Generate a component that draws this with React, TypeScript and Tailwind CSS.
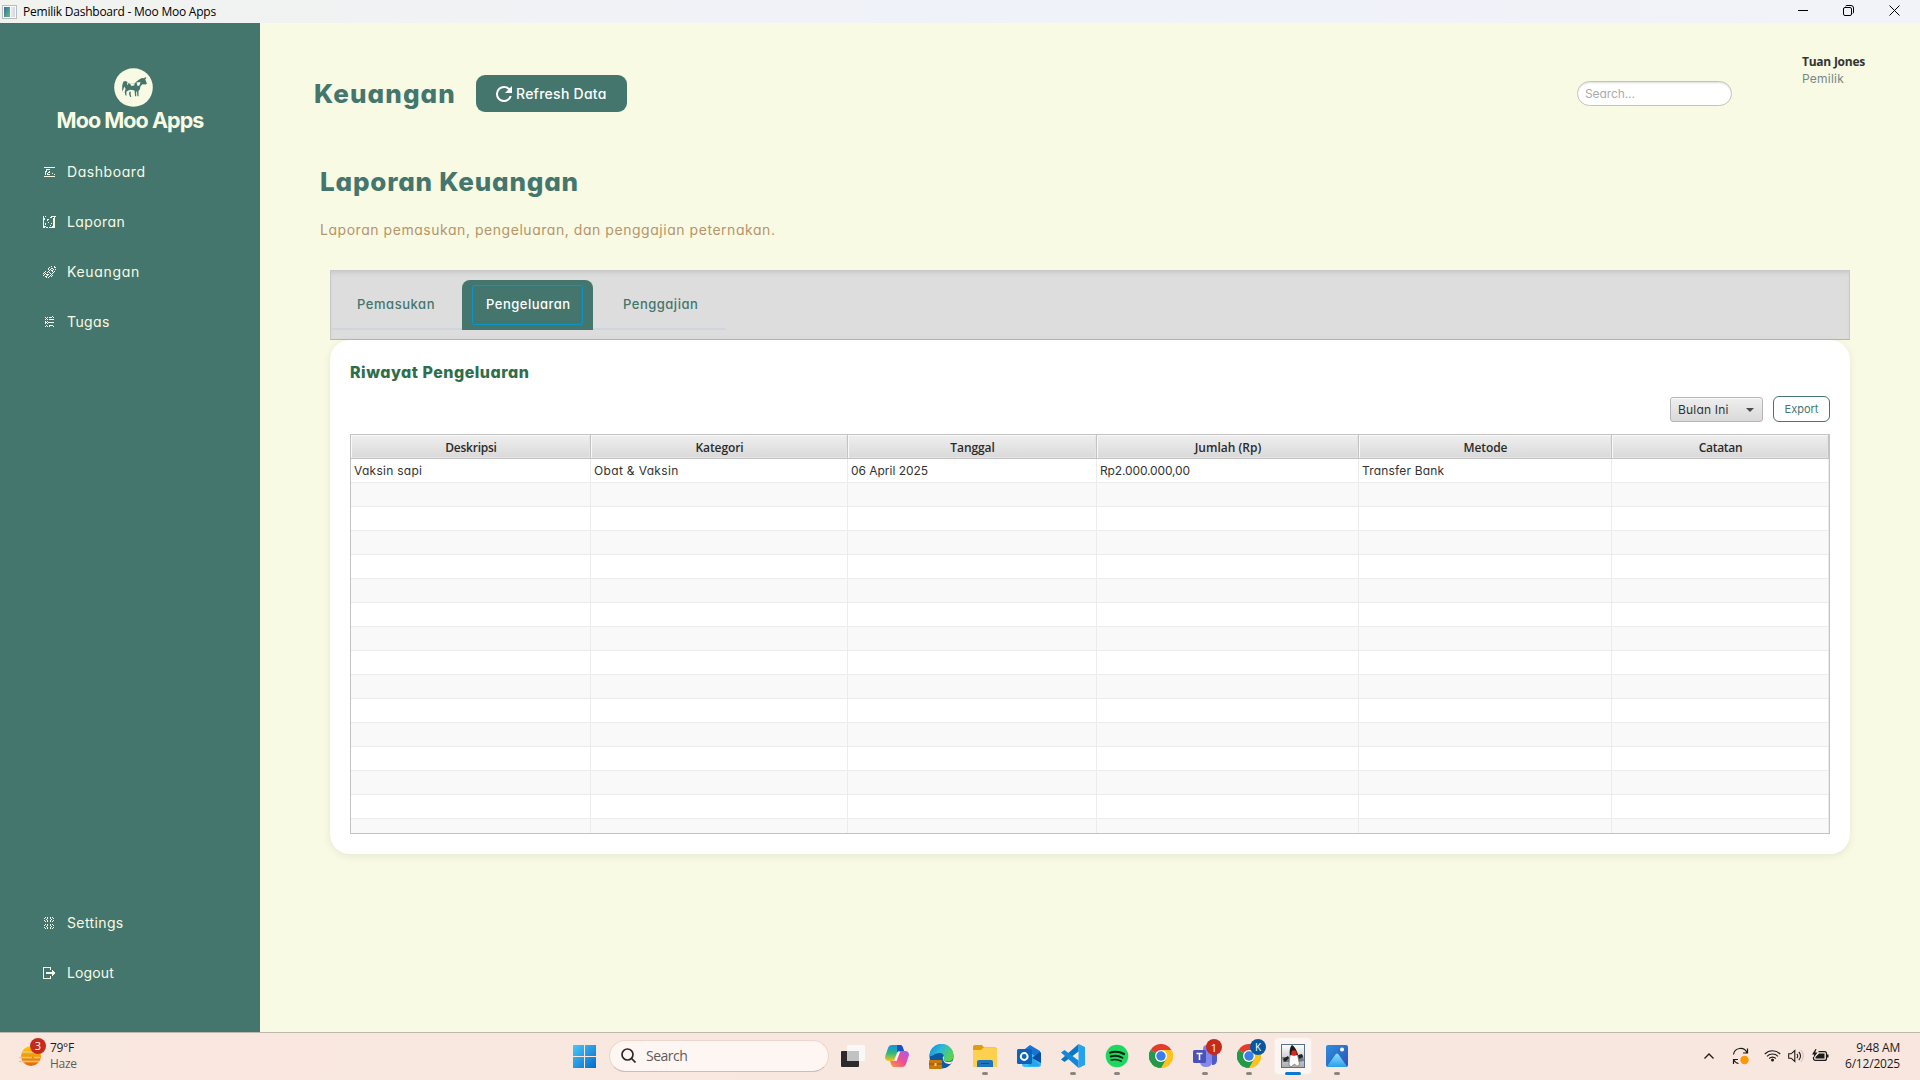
import React from 'react';

const POPPINS = "font-['Inter',sans-serif] [font-feature-settings:'cv11']";
const SEGOE = "font-['Open_Sans',sans-serif]";

function Pixels({ rows }: { rows: string[] }) {
  return (
    <svg className="shrink-0" width="13" height="13" viewBox="0 0 13 13" shapeRendering="crispEdges" fill="#f9fae4">
      {rows.flatMap((row, y) =>
        row.split('').map((c, x) => (c === '#' ? <rect key={`${x}-${y}`} x={x} y={y} width="1" height="1" /> : null)),
      )}
    </svg>
  );
}

const dashboardIcon = [
  '.............',
  '.###########.',
  '.............',
  '...####......',
  '...#.........',
  '..##..#......',
  '..#..##......',
  '..#.#....#...',
  '..#.###....#.',
  '.............',
  '.###########.',
  '.............',
  '.............',
];
const laporanIcon = [
  '#.#.....#####',
  '#......##..#.',
  '##........##.',
  '##..##....##.',
  '#...#.....##.',
  '#.........##.',
  '#....#....##.',
  '#.#.....#.##.',
  '#.#.......##.',
  '#......#..##.',
  '###......###.',
  '##.##.######.',
  '.............',
];
const keuanganIcon = [
  '........#..#.',
  '......#....##',
  '.....#..##...',
  '.....#.#..#.#',
  '......#.##...',
  '..#..#...#.#.',
  '.#..#.#...#..',
  '#.#....#.#...',
  '.#.###..#....',
  '#...#..#.#...',
  '..##..#.#....',
  '...#.#.......',
  '.............',
];
const tugasIcon = [
  '.........#...',
  '..#.#.###.#..',
  '...#.........',
  '..#.#.#####..',
  '.............',
  '..#.#........',
  '..##.######..',
  '..#.#........',
  '.............',
  '...#..####...',
  '..#.#.#...#..',
  '.............',
  '.............',
];
const settingsIcon = [
  '..#.#..#.#...',
  '.#..#..#..#..',
  '...#....#....',
  '.#..#..#..#..',
  '..#.#..#.#...',
  '.............',
  '.............',
  '..#.#..#.#...',
  '.#..#..#..#..',
  '...#....#....',
  '.#..#..#..#..',
  '..#.#..#.#...',
  '.............',
];
const logoutIcon = [
  '########.....',
  '#......#.....',
  '#......#.....',
  '#........#...',
  '#........##..',
  '#..#########.',
  '#..#########.',
  '#........##..',
  '#........#...',
  '#......#.....',
  '#......#.....',
  '########.....',
  '.............',
];

function NavItem({ icon, label, tracking }: { icon: string[]; label: string; tracking: string }) {
  return (
    <div className="flex h-[50px] items-center gap-[11px] pl-[43px]">
      <Pixels rows={icon} />
      <span className={`${POPPINS} ${tracking} text-[14px] leading-5 text-[#f9fae4]`}>{label}</span>
    </div>
  );
}

function TitleBar() {
  return (
    <header className="flex h-[23px] shrink-0 items-center bg-linear-to-r from-[#f1f3ef] via-[#f0f2fa] to-[#f2f3f8] pl-[2px]">
      <svg width="15" height="14" viewBox="0 0 15 14">
        <defs>
          <linearGradient id="win" x1="0" y1="0" x2="1" y2="1">
            <stop offset="0" stopColor="#2f6fa8" />
            <stop offset="1" stopColor="#6cc07a" />
          </linearGradient>
        </defs>
        <rect x=".5" y=".5" width="14" height="13" fill="#fafafa" stroke="#b9bcc4" />
        <rect x="2" y="2" width="6" height="10" fill="url(#win)" />
        <rect x="9" y="2" width="2" height="10" fill="#e3e6ee" />
        <rect x="11" y="2" width="2" height="10" fill="#d4dae6" />
      </svg>
      <span className={`${SEGOE} ml-[6px] text-[12px] leading-none tracking-[-0.23px] text-black`}>
        Pemilik Dashboard - Moo Moo Apps
      </span>
      <div className="mr-[20px] ml-auto flex items-center pb-[2px] text-black">
        <svg width="10" height="11" viewBox="0 0 10 11"><path d="M0 5.5h10" stroke="currentColor" /></svg>
        <svg className="ml-[35px]" width="11" height="11" viewBox="0 0 11 11" fill="none" stroke="currentColor">
          <rect x=".5" y="2.5" width="8" height="8" rx="1.5" />
          <path d="M2.5 1.200C2.800.8 3.300.5 4 .5h4A2.500 2.500 0 0 1 10.500 3v4c0 .7-.2 1.200-.7 1.500" />
        </svg>
        <svg className="ml-[35px]" width="11" height="11" viewBox="0 0 11 11"><path d="M.5.5l10 10M10.500.5l-10 10" stroke="currentColor" /></svg>
      </div>
    </header>
  );
}

function Sidebar() {
  return (
    <aside className="flex w-[260px] shrink-0 flex-col bg-[#44766d]">
      <div className="flex h-[124px] flex-col items-center pt-[45px]">
        <svg className="ml-[7px] shrink-0" width="39" height="39" viewBox="0 0 39 39">
          <circle cx="19.500" cy="19.500" r="19.300" fill="#f9fae4" />
          <path
            fill="#44766d"
            d="M9.500 13.500l2.500-.5 1.500 1.500 3 1.500 4-.5 2-2 2-1.500 1.500-1 2-1 2 .2 1.500-1.200.3 1.500-1 .8.8 1 1.300 3.200-1.200 1-3.200-.3-2 2-.6 3-1.400 1.800v5.200h-1.100l-.4-4.800h-.8v4.800h-1.100l-.6-5.800-3.800-.6-2.500.8-1.900 1.200.3 3.800h-1.100l-.9-3.500 1-3.200-1.400-2.500-.8 3-1.200 2V18l.5-2.500z"
          />
          <path fill="#f9fae4" d="M16 15.800l1.500 2.200 2.500-.6.800-1.900zM22.500 14.500l1 3.500 2-.5 1-3.500zM13 14.500l1.500 1-1 2z" />
          <path fill="#44766d" d="M15.500 23.500l1.500.5-.5 1.500.8 3.500h-1.100l-1.200-3z" />
          <path stroke="#44766d" strokeWidth=".8" d="M31.300 11.500l.5-2" />
        </svg>
        <div className={`${POPPINS} text-[21.500px] leading-[26px] font-bold tracking-[-0.95px] whitespace-nowrap text-[#f9fae4]`}>
          Moo Moo Apps
        </div>
      </div>
      <nav className="flex flex-1 flex-col pb-[34px]">
        <NavItem icon={dashboardIcon} label="Dashboard" tracking="tracking-[0.56px]" />
        <NavItem icon={laporanIcon} label="Laporan" tracking="tracking-[0.4px]" />
        <NavItem icon={keuanganIcon} label="Keuangan" tracking="tracking-[0.66px]" />
        <NavItem icon={tugasIcon} label="Tugas" tracking="tracking-[0.38px]" />
        <div className="flex-1" />
        <NavItem icon={settingsIcon} label="Settings" tracking="tracking-[0.38px]" />
        <NavItem icon={logoutIcon} label="Logout" tracking="tracking-[0.14px]" />
      </nav>
    </aside>
  );
}

const columns = [
  { title: 'Deskripsi', value: 'Vaksin sapi', cell: 'tracking-[0.27px]', head: 'tracking-[-0.25px]' },
  { title: 'Kategori', value: 'Obat & Vaksin', cell: 'tracking-[0.34px]', head: 'tracking-[-0.1px]' },
  { title: 'Tanggal', value: '06 April 2025', cell: 'tracking-[-0.03px]', head: 'tracking-[-0.1px]' },
  { title: 'Jumlah (Rp)', value: 'Rp2.000.000,00', cell: 'tracking-[-0.13px]', head: 'tracking-[0px]' },
  { title: 'Metode', value: 'Transfer Bank', cell: 'tracking-[0.18px]', head: 'tracking-[-0.1px]' },
  { title: 'Catatan', value: '', cell: '', head: 'tracking-[-0.3px]' },
];
const GRID = 'grid grid-cols-[240px_257px_249px_262px_253px_217px]';

function ExpenseTable() {
  return (
    <div className="mt-[12px] h-[400px] overflow-hidden border border-[#c3c3c3] bg-white">
      <div className={`${GRID} h-[24px] border-b border-[#c3c3c3]`}>
        {columns.map((c) => (
          <div
            key={c.title}
            className={`${SEGOE} ${c.head} flex items-center justify-center border-r border-[#c3c3c3] bg-linear-to-b from-[#efefef] to-[#d9d9d9] pt-[2px] pl-px text-[12px] font-semibold text-[#2b2b2b] shadow-[inset_1px_1px_0_#f8f8f8,inset_-1px_-1px_0_#e4e4e4]`}
          >
            {c.title}
          </div>
        ))}
      </div>
      {Array.from({ length: 16 }, (_, r) => (
        <div key={r} className={`${GRID} h-[24px] border-b border-[#ececec] even:bg-white odd:bg-[#f9f9f9]`}>
          {columns.map((c) => (
            <div
              key={c.title}
              className={`${POPPINS} ${c.cell} flex items-center border-r border-[#ececec] pl-[3px] text-[12px] whitespace-nowrap text-[#333]`}
            >
              {r === 0 ? c.value : ''}
            </div>
          ))}
        </div>
      ))}
    </div>
  );
}

function Tabs() {
  return (
    <div className={`${POPPINS} mt-[30px] flex h-[70px] items-start border border-[#b5b5b5] border-t-[#c8c8c8] border-r-[#c8c8c8] border-l-[#c8c8c8] bg-[#dddddd] pt-[9px] text-[13px] font-medium text-[#44766d] shadow-[inset_0_4px_4px_-2px_#c9c9c9]`}>
      <div className="flex h-[50px] w-[131px] items-center border-b-2 border-[#d0d4e0] pt-[2px] pl-[26px] tracking-[0.54px]">Pemasukan</div>
      <div className="flex h-[50px] w-[131px] items-center justify-center rounded-t-[8px] bg-[#44766d]">
        <div className="flex h-[40px] w-[111px] items-center rounded-[2px] border border-[#0d93c4] pl-[13px] tracking-[0.5px] text-white shadow-[inset_0_0_3px_#2b7f8d]">
          Pengeluaran
        </div>
      </div>
      <div className="flex h-[50px] w-[133px] items-center border-b-2 border-[#d0d4e0] pt-[2px] pl-[30px] tracking-[0.5px]">Penggajian</div>
    </div>
  );
}

function Content() {
  return (
    <main className={`${POPPINS} flex flex-1 flex-col bg-[#f9fae4]`}>
      <div className="flex h-[124px] items-start pl-[54px]">
        <h1 className="mt-[52px] w-[162px] text-[26px] leading-[38px] font-extrabold tracking-[1.1px] text-[#44766d]">Keuangan</h1>
        <button className="mt-[52px] flex h-[37px] w-[151px] items-center rounded-[9px] bg-[#44766d] pl-[20px] text-white">
          <svg width="16" height="16" viewBox="4 4 16 16" fill="currentColor">
            <path d="M17.650 6.350A7.958 7.958 0 0 0 12 4a8 8 0 1 0 7.730 10h-2.080A6 6 0 1 1 12 6c1.660 0 3.140.69 4.220 1.780L13 11h7V4z" />
          </svg>
          <span className="ml-[4px] text-[14px] font-medium tracking-[0.26px]">Refresh Data</span>
        </button>
        <div className="mt-[58px] ml-auto flex h-[25px] w-[155px] items-center rounded-full border border-[#c4c4bd] bg-white pl-[7px] text-[12px] tracking-[-0.1px] text-[#ababab] shadow-[inset_0_2px_2px_-1px_#dcdcdc]">
          Search...
        </div>
        <div className="mt-[30px] ml-[70px] w-[118px]">
          <div className={`${SEGOE} text-[12px] leading-[18px] font-bold tracking-[-0.24px] text-[#333]`}>Tuan Jones</div>
          <div className="text-[12px] leading-[16px] tracking-[0.23px] text-[#77878b]">Pemilik</div>
        </div>
      </div>
      <section className="pr-[70px] pl-[60px]">
        <h2 className="mt-[16px] text-[26px] leading-[38px] font-extrabold tracking-[0.8px] text-[#44766d]">Laporan Keuangan</h2>
        <p className="mt-[19px] text-[14px] leading-[20px] tracking-[0.54px] text-[#b5956b]">
          Laporan pemasukan, pengeluaran, dan penggajian peternakan.
        </p>
        <div className="pl-[10px]">
          <Tabs />
          <div className="h-[514px] rounded-[20px] bg-white px-[20px] pt-[20px] shadow-[0_2px_8px_rgba(0,0,0,0.08)]">
            <h3 className="h-[24px] text-[16px] leading-[24px] font-extrabold tracking-[0.5px] text-[#2f6e4a]">Riwayat Pengeluaran</h3>
            <div className="mt-[12px] flex h-[26px] items-end justify-end gap-[10px]">
              <div className="flex h-[25px] w-[93px] items-center rounded-[3px] border border-[#b5b5b5] bg-linear-to-b from-[#efefef] to-[#d9d9d9] pr-[8px] pl-[7px] text-[12px] tracking-[0.2px] text-[#333] shadow-[inset_0_1px_0_#fafafa]">
                Bulan Ini
                <svg className="ml-auto" width="8" height="4" viewBox="0 0 8 4"><path d="M0 0h8L4 4z" fill="#4a4a4a" /></svg>
              </div>
              <button className="flex h-[26px] w-[57px] items-center justify-center rounded-[6px] border border-[#44766d] bg-white text-[11px] text-[#44766d]">
                Export
              </button>
            </div>
            <ExpenseTable />
          </div>
        </div>
      </section>
    </main>
  );
}

function Chrome() {
  return (
    <svg width="24" height="24" viewBox="0 0 24 24">
      <path d="M12 12L1.600 6A12 12 0 0 1 22.400 6z" fill="#e33b2e" />
      <path d="M12 12L22.400 6A12 12 0 0 1 12 24z" fill="#fcc31e" />
      <path d="M12 12L12 24A12 12 0 0 1 1.600 6z" fill="#229a48" />
      <path d="M12 6h10.400A12 12 0 0 1 12 24l5.200-9z" fill="#fcc31e" />
      <path d="M6.800 15L1.600 6A12 12 0 0 0 12 24l5.200-9z" fill="#229a48" />
      <circle cx="12" cy="12" r="6" fill="#fff" />
      <circle cx="12" cy="12" r="4.700" fill="#3b7ded" />
    </svg>
  );
}

function TaskButton({ children, running, active }: { children: React.ReactNode; running?: boolean; active?: boolean }) {
  return (
    <div className="relative flex h-[46px] w-[44px] items-center justify-center">
      {active && <div className="absolute top-[4px] left-[3px] h-[38px] w-[38px] rounded-[4px] border border-[#f5ebe7] bg-[#fdf5f2]" />}
      <div className="relative">{children}</div>
      {running && <div className="absolute top-[39px] left-[19px] h-[3px] w-[6px] rounded-full bg-[#8d8582]" />}
      {active && <div className="absolute top-[39px] left-[14px] h-[3px] w-[16px] rounded-full bg-[#0b78d4]" />}
    </div>
  );
}

function Taskbar() {
  return (
    <footer className={`${SEGOE} flex h-[48px] shrink-0 border-t border-[#bdb8ae] bg-linear-to-r from-[#fae8df] via-[#f7e7df] to-[#f9e7df]`}>
      <div className="flex w-[573px] items-center pb-[2px] pl-[19px]">
        <div className="relative h-[22px] w-[22px]">
          <svg width="22" height="22" viewBox="0 0 22 22">
            <defs>
              <linearGradient id="sun" x1="0" y1="0" x2="0" y2="1">
                <stop offset="0" stopColor="#ffd000" />
                <stop offset="1" stopColor="#e8620c" />
              </linearGradient>
            </defs>
            <circle cx="12" cy="11" r="10" fill="url(#sun)" />
            <path d="M3 7h12M0 12.500h13M0 16.500h20M15 12.500h6" stroke="#e9c98b" strokeWidth="1.600" />
          </svg>
          <div className="absolute -top-[7px] left-[11px] flex h-4 w-4 items-center justify-center rounded-full bg-[#c42b1c] text-[11px] leading-none text-white">3</div>
        </div>
        <div className="ml-[9px] text-[12px] leading-[16px] tracking-[-0.3px] text-[#1d1b1a]">
          <div>79°F</div>
          <div className="text-[#625b58]">Haze</div>
        </div>
      </div>
      <svg className="mt-[12px]" width="23" height="23" viewBox="0 0 23 23">
        <defs>
          <linearGradient id="start" x1="0" y1="0" x2="1" y2="1">
            <stop offset="0" stopColor="#48c8fb" />
            <stop offset="1" stopColor="#0669cb" />
          </linearGradient>
        </defs>
        <path d="M0 0h11v11H0zM12 0h11v11H12zM0 12h11v11H0zM12 12h11v11H12z" fill="url(#start)" />
      </svg>
      <div className="mt-[7px] mr-[2px] ml-[13px] flex h-[32px] w-[220px] items-center rounded-full border border-[#ecd6cc] border-b-[#cdbcb4] bg-[#fdf6f3] pb-px pl-[11px]">
        <svg width="15" height="15" viewBox="0 0 15 15" fill="none" stroke="#2b2a29" strokeWidth="1.700">
          <circle cx="6.500" cy="6.500" r="5.500" />
          <path d="M10.500 10.500l4 4" />
        </svg>
        <span className="ml-[10px] text-[14px] tracking-[-0.5px] text-[#5f5b59]">Search</span>
      </div>
      <div className="flex">
        <TaskButton>
          <svg width="24" height="22" viewBox="0 0 24 22">
            <rect x="0" y="6" width="18" height="16" rx="1" fill="#2b2b2b" />
            <rect x="6" y="0" width="18" height="16" rx="1" fill="#f8f8f8" />
            <rect x="6" y="6" width="12" height="10" fill="#c2c2c2" />
          </svg>
        </TaskButton>
        <TaskButton>
          <svg width="24" height="22" viewBox="0 0 24 22">
            <defs>
              <linearGradient id="cpa" x1="0" y1="0" x2="0" y2="1">
                <stop offset="0" stopColor="#1790e8" /><stop offset=".5" stopColor="#2cb67d" /><stop offset="1" stopColor="#f5c518" />
              </linearGradient>
              <linearGradient id="cpb" x1="1" y1="0" x2="0" y2="1">
                <stop offset="0" stopColor="#a45cf0" /><stop offset=".5" stopColor="#ee4f94" /><stop offset="1" stopColor="#fb9a3c" />
              </linearGradient>
            </defs>
            <path d="M7 0h8c2 0 2.500 1.500 3 3l1 3h-4c-2 0-3 1-3.500 3L10 13c-.5 2-1.500 3-3 3H4c-3 0-4.500-2-3.700-5L3 3c.7-2 2-3 4-3z" fill="url(#cpa)" />
            <path d="M12 0h3c2 0 2.500 1.500 3 3l1 3h-4c-1.500 0-2.500 0-3 2z" fill="#1b4fc4" />
            <path d="M17 22H9c-2 0-2.500-1.500-3-3l-1-3h3c2 0 3-1 3.500-3L13 9c.5-2 1.500-3 3-3h4c3 0 4.500 2 3.700 5L21 19c-.7 2-2 3-4 3z" fill="url(#cpb)" />
            <path d="M13.500 7L10 16h1.500L15 7z" fill="#fff" />
          </svg>
        </TaskButton>
        <TaskButton>
          <svg width="25" height="25" viewBox="0 0 25 25">
            <defs>
              <linearGradient id="edge" x1="0" y1="0" x2="1" y2=".5">
                <stop offset="0" stopColor="#1588d6" /><stop offset=".5" stopColor="#2bb9d9" /><stop offset="1" stopColor="#5bd34e" />
              </linearGradient>
            </defs>
            <circle cx="12.500" cy="12.500" r="12" fill="#0c59a4" />
            <path d="M.5 12a12 12 0 0 1 24-.5c.2 4-2.500 6-6 6-3 0-4-1.500-4-2.500 1-1 1-6-4-6-4.500 0-8 4-10 3z" fill="url(#edge)" />
            <path d="M14 12c2 1 0 3 1 4.500 2 2 6 2 9 0-.5 1.500-1.300 2.500-2.300 3.200-3 .8-9-.7-7.700-7.700z" fill="#f7e9e2" />
            <rect x="0" y="16" width="13" height="9" rx="1" fill="#c8790b" />
            <path d="M0 20h13" stroke="#8b4e04" />
            <rect x="5.500" y="19" width="2" height="3" fill="#ffd45c" />
          </svg>
        </TaskButton>
        <TaskButton running>
          <svg width="24" height="22" viewBox="0 0 24 22">
            <path d="M0 2q0-2 2-2h7l2 2.500h11q2 0 2 2V8H0z" fill="#dd9d0e" />
            <path d="M0 5h8l2-2h12.500q1.500 0 1.500 1.500V22H0z" fill="#fdd04e" />
            <path d="M4 22v-5q0-2 2-2h12q2 0 2 2v5z" fill="#1e74bd" />
            <path d="M8 18.500h8" stroke="#114f85" />
          </svg>
        </TaskButton>
        <TaskButton>
          <svg width="24" height="23" viewBox="0 0 24 23">
            <path d="M4 7l9-7 10 6v12H4z" fill="#1a74cf" />
            <path d="M8 4l10 7 6-4v12q0 3-3 3H8q-3 0-3-3z" fill="#35bdf5" />
            <path d="M15 13l8-6V7l1 1v10z" fill="#0c4da3" />
            <path d="M15 13l9 8H11z" fill="#28a4ec" />
            <rect x="0" y="4" width="15" height="15" rx="1.500" fill="#0d63bb" />
            <circle cx="7.200" cy="11.500" r="3.400" fill="none" stroke="#fff" strokeWidth="2" />
          </svg>
        </TaskButton>
        <TaskButton running>
          <svg width="24" height="24" viewBox="0 0 24 24">
            <path d="M17.500 0L24 3v18l-6.500 3z" fill="#24a4f0" />
            <path d="M17.500 0v7.500L3.500 18 0 15.500z" fill="#0b76c4" />
            <path d="M0 8.500L3.500 6l14 10.500V24z" fill="#1488d8" />
          </svg>
        </TaskButton>
        <TaskButton running>
          <svg width="24" height="24" viewBox="0 0 24 24" fill="none" stroke="#0b1f10" strokeLinecap="round">
            <circle cx="12" cy="12" r="11.300" fill="#1ed760" stroke="none" />
            <path d="M5 8.700c4.500-1.400 10-1 14 1.300" strokeWidth="2.200" />
            <path d="M5.700 12.500c4-1.200 8.300-.7 11.800 1.300" strokeWidth="1.900" />
            <path d="M6.200 16c3.500-1 7-.6 10 1.200" strokeWidth="1.500" />
          </svg>
        </TaskButton>
        <TaskButton><Chrome /></TaskButton>
        <TaskButton running>
          <svg width="24" height="24" viewBox="0 0 24 24">
            <circle cx="14" cy="5" r="4" fill="#7b83eb" />
            <path d="M16 9h8v7q0 5-5 5z" fill="#5059c9" />
            <path d="M7 9h12v8q0 6-6 6t-6-6z" fill="#8289ea" />
            <rect x="0" y="6" width="13" height="13" rx="1.500" fill="#4a51b8" />
            <path d="M3.500 9.500h6M6.500 9.500v6.500" stroke="#fff" strokeWidth="1.600" />
          </svg>
          <div className="absolute -top-[5px] left-[13px] flex h-4 w-4 items-center justify-center rounded-full bg-[#c42b1c] text-[11px] leading-none text-white">1</div>
        </TaskButton>
        <TaskButton running>
          <Chrome />
          <div className="absolute -top-[5px] left-[13px] flex h-4 w-4 items-center justify-center rounded-full bg-[#08569c] text-[10px] leading-none text-white">K</div>
        </TaskButton>
        <TaskButton active>
          <svg width="24" height="24" viewBox="0 0 24 24">
            <defs>
              <linearGradient id="duke" x1="0" y1="0" x2="0" y2="1">
                <stop offset="0" stopColor="#ffffff" /><stop offset="1" stopColor="#a9adb4" />
              </linearGradient>
            </defs>
            <rect x=".5" y=".5" width="23" height="23" fill="url(#duke)" stroke="#56718f" />
            <path d="M1 13h7v5H2zM17 12l5-1 1 6-6 1z" fill="#77797d" />
            <path d="M2 15l5-3 1 2-4 4zM17 11l4-1 1 3-4 2z" fill="#222" />
            <path d="M11 1c2 1 5 5 6 10l-8 1c-1-5 0-9 2-11z" fill="#1b1b1b" />
            <path d="M9 11h7.500l2 9q-1 3-3 2l-2-2-3 2.500q-3 .5-2.500-3z" fill="#fafafa" stroke="#555" strokeWidth=".6" />
            <circle cx="13" cy="9" r="2.700" fill="#e0241c" />
          </svg>
        </TaskButton>
        <TaskButton running>
          <svg width="22" height="22" viewBox="0 0 22 22">
            <defs>
              <linearGradient id="ph" x1="0" y1="0" x2="1" y2="1">
                <stop offset="0" stopColor="#2b8fe0" /><stop offset="1" stopColor="#3150b5" />
              </linearGradient>
              <linearGradient id="ph2" x1="0" y1="0" x2="0" y2="1">
                <stop offset="0" stopColor="#8be0fb" /><stop offset="1" stopColor="#2a9eea" />
              </linearGradient>
            </defs>
            <rect width="22" height="22" rx="2" fill="url(#ph)" />
            <path d="M1 21.500L9.500 9.500q1.500-2 3 0L21 21.500q-.5.500-1 .5H2q-.7 0-1-.5z" fill="url(#ph2)" />
            <circle cx="16" cy="4.500" r="2" fill="#fff" />
          </svg>
        </TaskButton>
      </div>
      <div className="ml-auto flex items-center pr-[20px] pb-[2px] text-[#1d1b1a]">
        <svg width="10" height="6" viewBox="0 0 10 6" fill="none" stroke="currentColor" strokeWidth="1.300"><path d="M.5 5.500L5 1l4.500 4.500" /></svg>
        <svg className="ml-[18px]" width="18" height="18" viewBox="0 0 18 18" fill="none" stroke="currentColor" strokeWidth="1.200">
          <path d="M1.500 7.500A7 7 0 0 1 15 6M15.500 1.500V6H11M1.500 17v-4.500H6M1.500 12.500a7 7 0 0 0 5 4" />
          <circle cx="12.500" cy="13" r="4.200" fill="#ff9800" stroke="none" />
        </svg>
        <svg className="ml-[14px]" width="17" height="13" viewBox="0 0 17 13" fill="none" stroke="currentColor" strokeWidth="1.100">
          <path d="M.8 5a10.800 10.800 0 0 1 15.400 0M3 7.300a7.700 7.700 0 0 1 11 0M5.200 9.500a4.600 4.600 0 0 1 6.600 0" />
          <circle cx="8.500" cy="11" r="1.500" fill="currentColor" stroke="none" />
        </svg>
        <svg className="ml-[7px]" width="16" height="14" viewBox="0 0 16 14" fill="none" stroke="currentColor" strokeWidth="1.100">
          <path d="M.7 4.800h2.500L6.800 1.500v11L3.200 9.200H.7zM8.800 4.800a3 3 0 0 1 0 4.400M10.800 3a5.500 5.500 0 0 1 0 8" />
          <path d="M12.800 1.200a8 8 0 0 1 0 11.600" stroke="#cfc1bb" />
        </svg>
        <svg className="ml-[8px]" width="17" height="13" viewBox="0 0 17 13" fill="none" stroke="currentColor" strokeWidth="1.200">
          <path d="M6.500 2.600h6q2 0 2 2v4.800q0 2-2 2h-9q-2 0-2-2V8" />
          <path d="M7 4.500h5.500v5H3.500V8zM15 5.500h1.500v3H15z" fill="currentColor" stroke="none" />
          <path d="M3.500 0L0 5.500h2.200L1.500 9 5.500 3.500H3.200L4.500 0z" fill="currentColor" stroke="none" />
        </svg>
        <div className="ml-[16px] w-[55px] text-right text-[12px] leading-[16px] tracking-[-0.2px] whitespace-nowrap">
          <div>9:48 AM</div>
          <div>6/12/2025</div>
        </div>
      </div>
    </footer>
  );
}

export default function App() {
  return (
    <div className="flex h-[1080px] w-[1920px] flex-col overflow-hidden bg-[#f9fae4]">
      <TitleBar />
      <div className="flex min-h-0 flex-1">
        <Sidebar />
        <Content />
      </div>
      <Taskbar />
    </div>
  );
}
